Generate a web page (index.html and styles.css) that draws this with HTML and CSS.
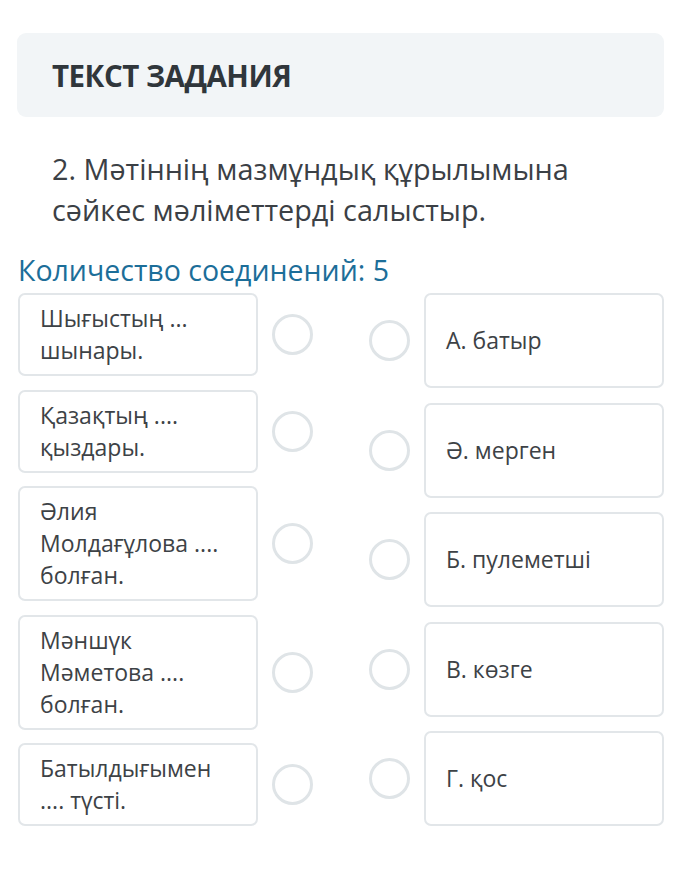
FILE: index.html
```html
<!DOCTYPE html>
<html lang="kk">
<head>
<meta charset="utf-8">
<link rel="stylesheet" href="styles.css">
</head>
<body>
<div class="page">
  <div class="task-head"><h1 class="task-title">ТЕКСТ ЗАДАНИЯ</h1></div>
  <p class="question">2. Мәтіннің мазмұндық құрылымына сәйкес мәліметтерді салыстыр.</p>
  <div class="count">Количество соединений: 5</div>
  <div class="match">
    <div class="col col-left">
      <div class="row"><div class="card card-l">Шығыстың ... шынары.</div><span class="dot"></span></div>
      <div class="row"><div class="card card-l">Қазақтың .... қыздары.</div><span class="dot"></span></div>
      <div class="row"><div class="card card-l">Әлия Молдағұлова .... болған.</div><span class="dot"></span></div>
      <div class="row"><div class="card card-l">Мәншүк Мәметова .... болған.</div><span class="dot"></span></div>
      <div class="row"><div class="card card-l">Батылдығымен .... түсті.</div><span class="dot"></span></div>
    </div>
    <div class="col col-right">
      <div class="row"><span class="dot"></span><div class="card card-r">А. батыр</div></div>
      <div class="row"><span class="dot"></span><div class="card card-r">Ә. мерген</div></div>
      <div class="row"><span class="dot"></span><div class="card card-r">Б. пулеметші</div></div>
      <div class="row"><span class="dot"></span><div class="card card-r">В. көзге</div></div>
      <div class="row"><span class="dot"></span><div class="card card-r">Г. қос</div></div>
    </div>
  </div>
</div>
</body>
</html>
```

FILE: styles.css
```css
* { box-sizing: border-box; }
html, body { margin: 0; padding: 0; background: #ffffff; }
body { font-family: "Open Sans", "Noto Sans", sans-serif; color: #3b4045; }
.page { padding: 33px 16px 0 17px; }
.task-head {
  background: #f2f5f7;
  border-radius: 9px;
  height: 84px;
  display: flex;
  align-items: center;
  padding-left: 35px;
}
.task-title {
  margin: 0;
  font-size: 29.5px;
  font-weight: 700;
  color: #30363b;
  letter-spacing: -0.5px;
}
.question {
  margin: 31px 0 0 35px;
  font-size: 28.8px;
  line-height: 41px;
  color: #3b4045;
  width: 560px;
}
.count {
  margin: 22px 0 0 1px;
  font-size: 28.5px;
  line-height: 36px;
  color: #1c6e99;
}
.match {
  display: flex;
  justify-content: space-between;
  margin-top: 5px;
  padding-left: 1px;
}
.col { display: flex; flex-direction: column; }
.col-left { gap: 13.5px; }
.col-right { gap: 14.5px; }
.row { display: flex; align-items: center; }
.card {
  background: #fff;
  border: 2px solid #e2e6e9;
  border-radius: 7px;
  width: 240px;
  font-size: 23px;
  line-height: 32px;
  color: #3d4246;
  padding: 7px 18px 8px 20px;
}
.card-r {
  height: 95px;
  display: flex;
  align-items: center;
}
.dot {
  width: 41px;
  height: 41px;
  border: 3px solid #dfe4e7;
  border-radius: 50%;
  flex: none;
}
.col-left .dot { margin-left: 14px; }
.col-right .dot { margin-right: 14px; }
```
